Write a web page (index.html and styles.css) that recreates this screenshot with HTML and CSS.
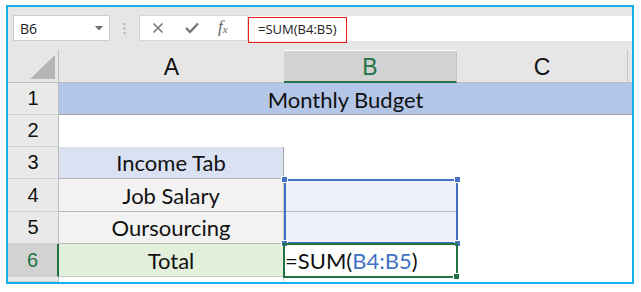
FILE: index.html
```html
<!DOCTYPE html>
<html>
<head>
<meta charset="utf-8">
<link rel="stylesheet" href="styles.css">
</head>
<body>
<div class="frame">
  <div class="toolbar">
    <div class="namebox">
      <span class="nb-text">B6</span>
      <svg class="nb-arrow" width="8" height="5" viewBox="0 0 8 5"><path d="M0 0H8L4 4.5Z" fill="#6d6d6d"/></svg>
    </div>
    <div class="grip">
      <svg width="3" height="11" viewBox="0 0 3 11"><rect x="0.5" y="0" width="2" height="2" fill="#b0b0b0"/><rect x="0.5" y="4.5" width="2" height="2" fill="#b0b0b0"/><rect x="0.5" y="9" width="2" height="2" fill="#b0b0b0"/></svg>
    </div>
    <div class="fbuttons">
      <svg class="fb-icon" width="12" height="12" viewBox="0 0 12 12"><path d="M1.5 1.5L10.5 10.5M10.5 1.5L1.5 10.5" stroke="#777" stroke-width="1.6" fill="none"/></svg>
      <svg class="fb-icon" width="14" height="12" viewBox="0 0 14 12"><path d="M1 6L5 10L13 1.5" stroke="#777" stroke-width="2.4" fill="none"/></svg>
      <span class="fx">f<sub>x</sub></span>
    </div>
    <div class="formula">
      <span class="f-text">=SUM(B4:B5)</span>
    </div>
  </div>
  <div class="sheet">
    <div class="grid">
      <div class="corner"><svg width="25" height="24" viewBox="0 0 25 24"><path d="M25 0V24H0Z" fill="#b5b5b5"/></svg></div>
      <div class="colhead">A</div>
      <div class="colhead sel">B</div>
      <div class="colhead c">C</div>
      <div class="colhead strip"></div>

      <div class="rowhead">1</div>
      <div class="cell title">Monthly Budget</div>

      <div class="rowhead">2</div>
      <div class="cell"></div>
      <div class="cell"></div>
      <div class="cell wide"></div>

      <div class="rowhead">3</div>
      <div class="cell income">Income Tab</div>
      <div class="cell"></div>
      <div class="cell wide"></div>

      <div class="rowhead">4</div>
      <div class="cell item">Job Salary</div>
      <div class="cell range r4"></div>
      <div class="cell wide"></div>

      <div class="rowhead">5</div>
      <div class="cell item">Oursourcing</div>
      <div class="cell range"></div>
      <div class="cell wide"></div>

      <div class="rowhead active">6</div>
      <div class="cell total">Total</div>
      <div class="cell formula-cell">=SUM(<span class="ref">B4:B5</span>)</div>
      <div class="cell wide"></div>

      <div class="rowhead tail"></div>
      <div class="cell tailcell"></div>
      <div class="cell"></div>
      <div class="cell wide"></div>
    </div>
    <div class="refbox">
      <span class="h tl"></span><span class="h tr"></span><span class="h bl"></span><span class="h br"></span>
    </div>
    <div class="activebox"><span class="fill"></span></div>
  </div>
</div>
</body>
</html>
```

FILE: styles.css
```css
html, body {
  margin: 0;
  padding: 0;
  background: #ffffff;
}

.frame {
  margin: 5px 0 0 6px;
  width: 624px;
  height: 275px;
  border: 2px solid #12b1ed;
  overflow: hidden;
  background: #e6e6e6;
}

.toolbar {
  height: 43px;
  box-sizing: border-box;
  padding: 8px 0 0 5px;
  display: flex;
  align-items: flex-start;
  background: #e6e6e6;
}

.namebox {
  width: 97px;
  height: 26px;
  box-sizing: border-box;
  background: #ffffff;
  border: 1px solid #cfcfcf;
  display: flex;
  align-items: center;
  justify-content: space-between;
  padding: 0 6px 0 6px;
}

.nb-text {
  font-family: "Open Sans", "Liberation Sans", sans-serif;
  font-size: 14px;
  color: #222;
}

.nb-arrow {
  margin-top: 1px;
}

.grip {
  width: 29px;
  height: 26px;
  display: flex;
  align-items: center;
  justify-content: center;
}

.fbuttons {
  width: 109px;
  height: 26px;
  box-sizing: border-box;
  background: #ffffff;
  border: 1px solid #d6d6d6;
  display: flex;
  align-items: center;
  padding-left: 12px;
}

.fb-icon:nth-child(1) {
  margin-right: 21px;
}

.fb-icon:nth-child(2) {
  margin-right: 19px;
}

.fx {
  font-family: "Liberation Serif", serif;
  font-style: italic;
  font-size: 17px;
  color: #666;
  line-height: 1;
  margin-top: -3px;
}

.fx sub {
  font-size: 11px;
  vertical-align: -1px;
}

.formula {
  flex: 1;
  height: 25px;
  margin-top: 1px;
  background: #ffffff;
  position: relative;
}

.f-text {
  position: absolute;
  left: 0;
  top: 1px;
  width: 99px;
  height: 26px;
  box-sizing: border-box;
  border: 1px solid #ee1c1c;
  padding-left: 9px;
  font-family: "Open Sans", "Liberation Sans", sans-serif;
  font-size: 13px;
  line-height: 23px;
  color: #222;
}

.sheet {
  position: relative;
  height: 232px;
}

.grid {
  display: grid;
  grid-template-columns: 51px 225px 173px 171px 4px;
  grid-template-rows: 33px 32px 32px 32px 33px 32px 33px 5px;
  background: #ffffff;
}

.corner {
  background: #e6e6e6;
  border-right: 1px solid #bdbdbd;
  border-bottom: 1px solid #bdbdbd;
  box-sizing: border-box;
  display: flex;
  align-items: flex-end;
  justify-content: flex-end;
  padding: 0 3px 3px 0;
}

.colhead {
  background: #e6e6e6;
  border-bottom: 1px solid #bdbdbd;
  box-sizing: border-box;
  display: flex;
  align-items: center;
  justify-content: center;
  font-family: "Liberation Sans", Arial, sans-serif;
  font-size: 23px;
  color: #111;
  padding-top: 2px;
}

.colhead.sel {
  background: #d2d2d2;
  color: #217346;
  border-top: 1px solid #d2d2d2;
  border-right: 1px solid #c4c4c4;
  border-bottom: 2px solid #217346;
  margin-top: 1px;
}

.colhead.c {
  border-right: 1px solid #c4c4c4;
}

.rowhead {
  background: #e9e9e9;
  border-right: 1px solid #bdbdbd;
  border-bottom: 1px solid #d0d0d0;
  box-sizing: border-box;
  display: flex;
  align-items: center;
  justify-content: center;
  font-family: "Liberation Sans", Arial, sans-serif;
  font-size: 20px;
  color: #111;
}

.rowhead.active {
  background: #d2d2d2;
  color: #217346;
  border-right: 2px solid #217346;
}

.cell {
  box-sizing: border-box;
  display: flex;
  align-items: center;
  justify-content: center;
  font-family: Lato, "Open Sans", sans-serif;
  font-size: 22px;
  color: #111;
  white-space: nowrap;
}

.cell.wide {
  grid-column: span 2;
}

.cell.title {
  grid-column: 2 / 6;
  background: #b4c6e7;
  border-bottom: 1px solid #a6a6a6;
  padding-top: 1px;
}

.cell.income {
  background: #d9e1f2;
  border-right: 1px solid #a6a6a6;
  border-bottom: 1px solid #b8b8b8;
}

.cell.item {
  background: #f2f2f2;
  border-right: 1px solid #c8c8c8;
  border-bottom: 1px solid #b8b8b8;
}

.cell.range {
  background: #edf0f9;
}

.cell.range.r4 {
  border-bottom: 1px solid #b7b7c0;
}

.cell.total {
  background: #e2efda;
  border-right: 1px solid #c8c8c8;
  border-bottom: 1px solid #c8c8c8;
}

.cell.formula-cell {
  justify-content: flex-start;
  padding-left: 1px;
  background: #ffffff;
}

.ref {
  color: #4472c4;
}

.cell.tailcell {
  border-right: 1px solid #d4d4d4;
}

.refbox {
  position: absolute;
  left: 276px;
  top: 129px;
  width: 174px;
  height: 65px;
  box-sizing: border-box;
  border: 2px solid #4472c4;
  pointer-events: none;
}

.h {
  position: absolute;
  width: 5px;
  height: 5px;
  background: #4472c4;
  border: 1px solid #ffffff;
}

.h.tl { left: -5px; top: -5px; }
.h.tr { right: -5px; top: -5px; }
.h.bl { left: -5px; bottom: -5px; }
.h.br { right: -5px; bottom: -5px; }

.activebox {
  position: absolute;
  left: 275px;
  top: 193px;
  width: 175px;
  height: 35px;
  box-sizing: border-box;
  border: 2px solid #217346;
  pointer-events: none;
}

.fill {
  position: absolute;
  right: -4px;
  bottom: -4px;
  width: 5px;
  height: 5px;
  background: #217346;
  border: 1px solid #ffffff;
}
```
